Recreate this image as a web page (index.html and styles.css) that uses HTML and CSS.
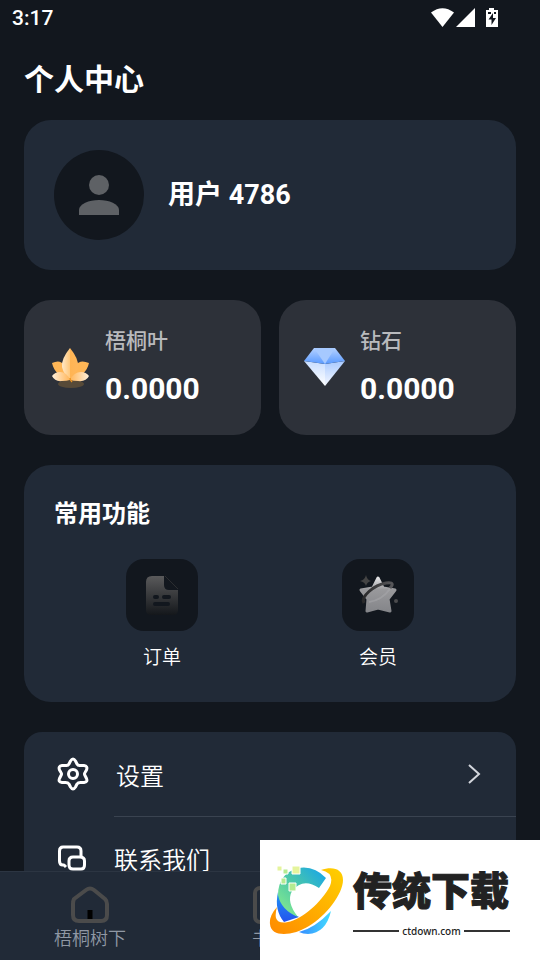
FILE: index.html
```html
<!DOCTYPE html>
<html lang="zh-CN">
<head>
  <meta charset="UTF-8">
  <meta name="viewport" content="width=device-width, initial-scale=1">
  <title>个人中心</title>
  <link rel="stylesheet" href="styles.css">
</head>
<body>

<div class="status-bar">
  <span>3:17</span>
  <svg width="70" height="20" viewBox="0 0 70 20" fill="#fff">
    <path d="M0 4.500Q11.500-4 23 4.500L11.500 19Z"/>
    <path d="M25 19L44 0V19Z"/>
    <path fill-rule="evenodd" d="M58 0h5v2h4v17H55V2h3ZM57 4v2h3V4ZM63 4v2h2V4ZM62 5l-4.500 6.500h3V17l4.500-7h-3Z"/>
  </svg>
</div>

<main>
  <h1>个人中心</h1>

  <section class="card profile">
    <div class="avatar">
      <svg width="40" height="40" viewBox="0 0 40 40" fill="#5e6165">
        <circle cx="20" cy="10" r="10"/>
        <path d="M0 40v-5c0-6 10-10 20-10s20 4 20 10v5Z"/>
      </svg>
    </div>
    <h2>用户 4786</h2>
  </section>

  <section class="balances">
    <div class="balance">
      <svg width="42" height="42" viewBox="-1 -1 42 42">
        <defs>
          <linearGradient id="leafMid">
            <stop offset="0" stop-color="#ffe8c8"/><stop offset=".5" stop-color="#ffc77a"/><stop offset=".51" stop-color="#ffb453"/><stop offset="1" stop-color="#ffb75b"/>
          </linearGradient>
          <linearGradient id="leafLow" x1="1" x2="0">
            <stop offset="0" stop-color="#ffb65a"/><stop offset="1" stop-color="#ffeed8"/>
          </linearGradient>
          <linearGradient id="leafLow2">
            <stop offset="0" stop-color="#ffb65a"/><stop offset="1" stop-color="#ffeed8"/>
          </linearGradient>
        </defs>
        <ellipse cx="21" cy="37" rx="13" ry="4" fill="#574a38"/>
        <path d="M20 33C11 31 4 25 2 16Q10 12 14 18L20 27L26 18Q30 12 39 16C37 25 30 31 20 33Z" fill="#ffb656"/>
        <path d="M20 1Q11 12 12 20Q14 28 20 33Q26 28 28 20Q29 12 20 1Z" fill="url(#leafMid)"/>
        <path d="M20 33Q17 25 10 25Q5 25 2 29Q5 35 12 34Q17 34 20 33Z" fill="url(#leafLow)"/>
        <path d="M20 33Q24 25 31 25Q36 25 39 29Q36 35 28 34Q23 34 20 33Z" fill="url(#leafLow2)"/>
        <path d="M20 31q0 2 2 4" fill="none" stroke="#ec9420" stroke-width="1.500"/>
      </svg>
      <dl>
        <dt>梧桐叶</dt>
        <dd>0.0000</dd>
      </dl>
    </div>
    <div class="balance">
      <svg width="42" height="42" viewBox="0 -1 42 42">
        <defs>
          <linearGradient id="gemTop" x2="0" y2="1">
            <stop offset="0" stop-color="#b5d1ff"/><stop offset="1" stop-color="#599aff"/>
          </linearGradient>
          <linearGradient id="gemLow" x2="0" y2="1">
            <stop offset="0" stop-color="#a9caff"/><stop offset="1" stop-color="#f5f8ff"/>
          </linearGradient>
          <linearGradient id="gemLow2" x2="0" y2="1">
            <stop offset="0" stop-color="#c7ddff"/><stop offset="1" stop-color="#fff"/>
          </linearGradient>
        </defs>
        <path d="M0 14L21 17V39Z" fill="url(#gemLow2)"/>
        <path d="M41 14L21 17V39Z" fill="url(#gemLow)"/>
        <path d="M10 1H31L41 14L21 17L0 14Z" fill="url(#gemTop)"/>
        <path d="M10 1H31L21 17Z" fill="#a6c9ff"/>
      </svg>
      <dl>
        <dt>钻石</dt>
        <dd>0.0000</dd>
      </dl>
    </div>
  </section>

  <section class="card features">
    <h3>常用功能</h3>
    <div class="feature-grid">
      <a href="#" class="feature">
        <span class="tile">
          <svg width="42" height="42" viewBox="0 0 42 42">
            <defs>
              <linearGradient id="docFill" x2="0" y2="1">
                <stop offset="0" stop-color="#5a5a5b"/><stop offset="1" stop-color="#14171b"/>
              </linearGradient>
            </defs>
            <path d="M11 2H23V11Q23 16 28 16H37V36Q37 41 32 41H10Q5 41 5 36V8Q5 2 11 2Z" fill="url(#docFill)"/>
            <path d="M24 2L37 15" stroke="#2b2d30"/>
            <path d="M14 23h2M23 23h5M14 30h13" stroke="#12171e" stroke-width="4" stroke-linecap="round"/>
          </svg>
        </span>
        订单
      </a>
      <a href="#" class="feature">
        <span class="tile">
          <svg width="42" height="42" viewBox="0 0 42 42">
            <defs>
              <linearGradient id="starFill" x2="0" y2="1">
                <stop offset="0" stop-color="#e4e4e6"/><stop offset=".35" stop-color="#99999c"/><stop offset="1" stop-color="#85868a"/>
              </linearGradient>
              <linearGradient id="ringFill">
                <stop offset="0" stop-color="#29292a"/><stop offset="1" stop-color="#57575a"/>
              </linearGradient>
            </defs>
            <path d="M9 1Q10 6 14 7Q10 8 9 12Q8 8 3 7Q8 6 9 1Z" fill="#444"/>
            <path d="M21 4L26 14L38 16L31 25L33 37L21 34L10 37L11 25L4 16L16 14Z" fill="url(#starFill)" stroke="url(#starFill)" stroke-width="3" stroke-linejoin="round"/>
            <path d="M7 29C3 23 17 11 29 9C37 8 36 11 33 14" fill="none" stroke="url(#ringFill)" stroke-width="3"/>
            <path d="M12 28Q25 26 33 15" fill="none" stroke="#aaaaad" stroke-width="2" opacity=".5"/>
            <circle cx="39" cy="27" r="2" fill="#4b4b4d"/>
          </svg>
        </span>
        会员
      </a>
    </div>
  </section>

  <nav class="card menu">
    <a href="#" class="menu-row">
      <svg width="34" height="34" viewBox="0 0 34 34" fill="none" stroke="#fff" stroke-width="3" stroke-linejoin="round">
        <path d="M14.500 4Q17 0 19.500 4L21 7Q22 9 24.500 8.500L28 8.500Q32 9 30.500 13L29 15.500Q28 17 29 18.500L30.500 21.500Q32 25 28 25.500L24.500 25.500Q22 25.500 21 27L19.500 30Q17 34 14.500 30L13 27Q12 25.500 9.500 25.500L6 25.500Q2 25 3.500 21.500L5 18.500Q6 17 5 15.500L3.500 13Q2 9 6 8.500L9.500 8.500Q12 9 13 7Z"/>
        <circle cx="17" cy="17" r="4.500"/>
      </svg>
      <span>设置</span>
      <svg class="arrow" width="14" height="20" viewBox="0 0 14 20" fill="none" stroke="#d3d6dc" stroke-width="2">
        <path d="M1 1L11 10L1 19"/>
      </svg>
    </a>
    <a href="#" class="menu-row">
      <svg width="34" height="34" viewBox="0 -1 34 34" fill="none" stroke="#fff" stroke-width="3" stroke-linejoin="round">
        <path d="M10 24L8 22H7Q3.500 22 3.500 18V8Q3.500 4 7 4H21Q25 4 25 8V13"/>
        <path d="M17 14H24Q28.500 14 28.500 18V22Q28.500 26 25 26H17Q13 26 13 22V18Q13 14 17 14Z"/>
      </svg>
      <span>联系我们</span>
    </a>
  </nav>
</main>

<nav class="tab-bar">
  <a href="#">
    <svg width="40" height="38" viewBox="0 0 40 38" fill="none" stroke="#4b4b4b" stroke-width="4" stroke-linejoin="round">
      <path d="M4 13L16 4Q20 1 24 4L35 13Q37 15 37 18V29Q37 35 31 35H9Q3 35 3 29V18Q3 15 4 13Z"/>
      <path d="M20 24V33" stroke="#000" stroke-width="5"/>
    </svg>
    <span>梧桐树下</span>
  </a>
  <a href="#">
    <svg width="40" height="38" viewBox="0 0 40 38" fill="none" stroke="#4b4b4b" stroke-width="4">
      <rect x="5" y="2" width="30" height="34" rx="5"/>
    </svg>
    <span>书架</span>
  </a>
</nav>

<aside class="brand">
  <svg width="76" height="72" viewBox="0 0 76 72">
    <defs>
      <linearGradient id="cTop" x1="0" y1="1" x2="1" y2="0">
        <stop offset="0" stop-color="#8ef08a"/><stop offset=".5" stop-color="#4cc8a8"/><stop offset="1" stop-color="#12a2ee"/>
      </linearGradient>
      <linearGradient id="cBlue" x2="0" y2="1">
        <stop offset="0" stop-color="#2196f3"/><stop offset="1" stop-color="#2453ee"/>
      </linearGradient>
      <linearGradient id="cLow">
        <stop offset="0" stop-color="#368cff"/><stop offset="1" stop-color="#43dcff"/>
      </linearGradient>
      <linearGradient id="orbit" x1="0" y1="1" x2="1" y2="0">
        <stop offset="0" stop-color="#ff8a00"/><stop offset="1" stop-color="#ffd000"/>
      </linearGradient>
    </defs>
    <path d="M9 28Q5 46 15 58L30 53Q12 44 9 28Z" fill="url(#cBlue)"/>
    <path d="M57 14Q45 1 29 4Q9 10 9 31Q12 46 29 53Q17 38 23 27Q34 13 50 24Z" fill="url(#cTop)"/>
    <path d="M30 68Q46 64 62 47Q57 69 39 70Q34 70 30 68Z" fill="url(#cLow)"/>
    <path d="M52 6C64 2 74 5 74 16C74 30 57 52 40 62C24 72 2 74 1 60Q0 52 8 43Q6 50 7 54Q9 60 19 58C32 56 53 38 61 22Q66 9 52 6Z" fill="url(#orbit)"/>
    <g stroke="#fff">
      <path d="M8 2h5v5H8ZM23 2h8v8h-8Z" fill="#e5f49c"/>
      <path d="M14 5h5v5h-5ZM12 14h5v6h-5ZM20 19h7v8h-7Z" fill="#b5eb91"/>
    </g>
  </svg>
  <div class="brand-text">
    <strong>传统下载</strong>
    <span>ctdown.com</span>
  </div>
</aside>

</body>
</html>
```
FILE: styles.css
```css
:root {
  --bg: #12171e;
  --card: #212a37;
  --card-alt: #2d3139;
  --text: #fff;
}
* { box-sizing: border-box; }
body {
  margin: 0;
  height: 100vh;
  display: flex;
  flex-direction: column;
  font-family: Roboto, "Noto Sans CJK SC", sans-serif;
  background: var(--bg);
  color: var(--text);
}
h1, h2, h3, dl, dd { margin: 0; }
a { color: inherit; text-decoration: none; }
svg { flex: none; display: block; }

.status-bar {
  flex: none;
  height: 36px;
  padding: 0 39px 0 12px;
  display: flex;
  justify-content: space-between;
  align-items: center;
  font-size: 21px;
  font-weight: 500;
}

main {
  flex: 1;
  min-height: 0;
  overflow-y: auto;
  scrollbar-width: none;
  padding: 22px 24px 24px;
}
h1 {
  font-size: 30px;
  line-height: 44px;
  font-weight: 700;
  margin-bottom: 18px;
}
.card {
  background: var(--card);
  border-radius: 27px;
  margin-bottom: 30px;
}

.profile {
  display: flex;
  align-items: center;
  gap: 24px;
  padding: 30px;
}
.profile h2 {
  font-size: 27px;
  line-height: 36px;
  font-weight: 700;
}
.avatar {
  width: 90px;
  height: 90px;
  border-radius: 50%;
  background: var(--bg);
  display: grid;
  place-items: center;
}

.balances {
  display: grid;
  grid-template-columns: 1fr 1fr;
  gap: 18px;
  margin-bottom: 30px;
}
.balance {
  display: flex;
  align-items: center;
  gap: 14px;
  padding: 25px 25px 26px;
  background: var(--card-alt);
  border-radius: 27px;
}
.balance dt {
  font-size: 21px;
  line-height: 32px;
  font-weight: 500;
  color: #b9babd;
}
.balance dd {
  font-size: 30px;
  line-height: 40px;
  font-weight: 700;
  margin-top: 12px;
}

.features { padding: 30px 30px 29px; }
.features h3 {
  font-size: 24px;
  line-height: 38px;
  font-weight: 700;
  margin-bottom: 26px;
}
.feature-grid {
  display: grid;
  grid-template-columns: 1fr 1fr;
}
.feature {
  display: flex;
  flex-direction: column;
  align-items: center;
  gap: 12px;
  font-size: 19px;
  line-height: 30px;
  font-weight: 350;
}
.tile {
  width: 72px;
  height: 72px;
  border-radius: 18px;
  background: var(--bg);
  display: grid;
  place-items: center;
}

.menu { border-radius: 18px; }
.menu-row {
  display: flex;
  align-items: center;
  height: 84px;
  padding: 0 34px 0 32px;
  font-size: 24px;
  font-weight: 350;
}
.menu-row span {
  flex: 1;
  margin-left: 26px;
}
.menu-row + .menu-row {
  border-top: 1px solid #3a4350;
  margin-left: 90px;
  padding-left: 0;
}
.menu-row + .menu-row svg { margin-left: -58px; }
.menu-row + .menu-row span { margin-left: 24px; }

.tab-bar {
  flex: none;
  display: grid;
  grid-template-columns: repeat(3, 1fr);
  height: 89px;
  padding-top: 14px;
  background: var(--card);
  border-top: 1px solid #2c3542;
  font-size: 18px;
  line-height: 26px;
  font-weight: 350;
  color: #9098a5;
}
.tab-bar a {
  display: flex;
  flex-direction: column;
  align-items: center;
  gap: 2px;
}

/* download site badge */
.brand {
  position: fixed;
  right: 0;
  bottom: 0;
  width: 280px;
  height: 120px;
  padding: 4px 30px 0 9px;
  display: flex;
  align-items: center;
  gap: 8px;
  background: #fff;
  color: #222;
}
.brand svg { margin-bottom: 4px; }
.brand-text { flex: 1; }
.brand strong {
  display: block;
  font-size: 39px;
  line-height: 54px;
  font-weight: 900;
  -webkit-text-stroke: 1px #222;
}
.brand span {
  display: flex;
  align-items: center;
  gap: 3px;
  font: 500 10px/16px "Noto Sans", sans-serif;
  margin-top: 4px;
}
.brand span::before,
.brand span::after {
  content: "";
  flex: 1;
  height: 2px;
  background: #333;
}
```
